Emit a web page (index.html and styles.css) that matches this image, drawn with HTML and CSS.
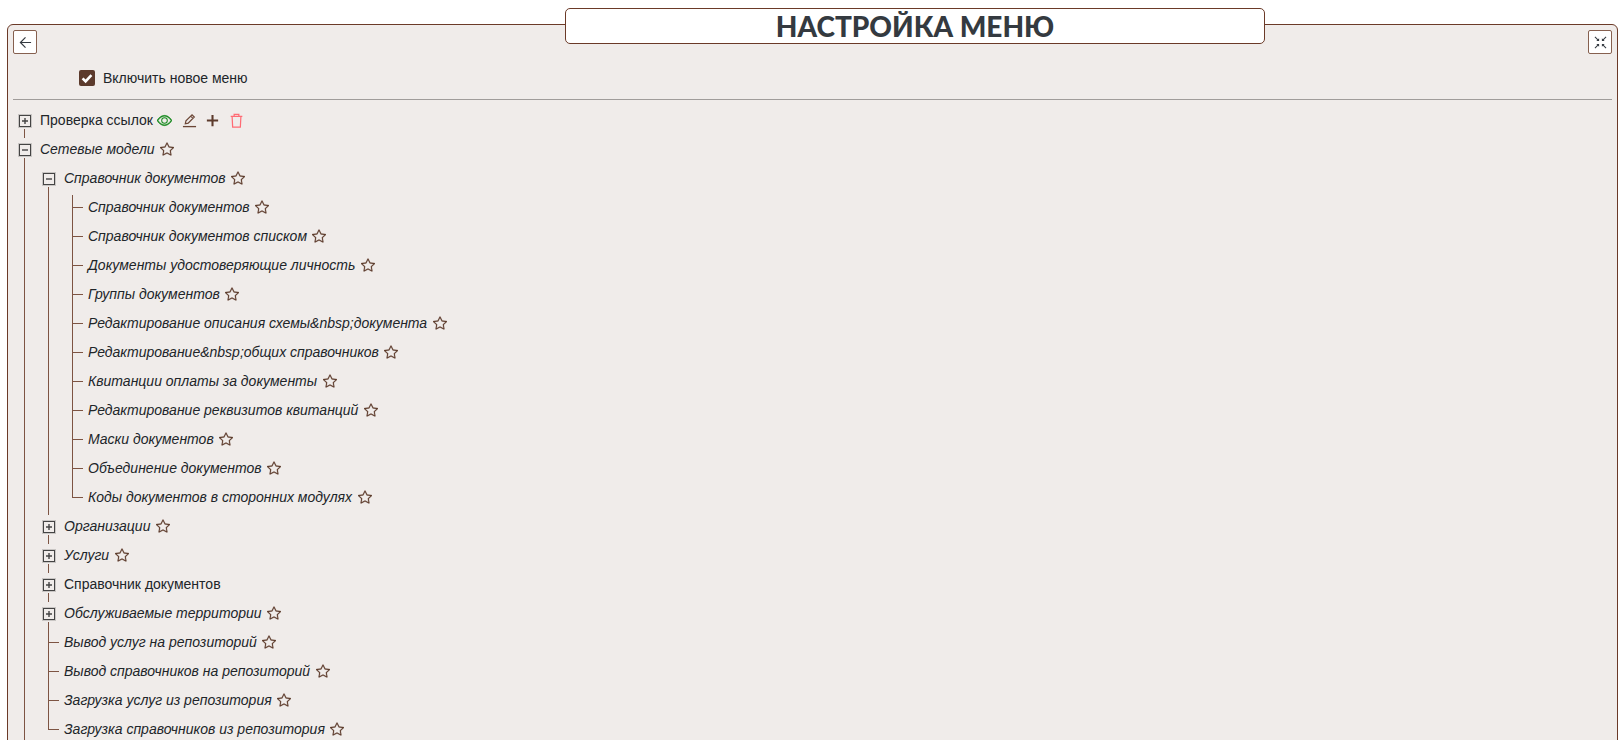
FILE: index.html
```html
<!DOCTYPE html>
<html lang="ru">
<head>
<meta charset="utf-8">
<title>Настройка меню</title>
<link rel="stylesheet" href="styles.css">
</head>
<body>
<svg class="defs" aria-hidden="true">
  <symbol id="star" viewBox="0 0 16 16"><path fill="currentColor" stroke="currentColor" stroke-width=".25" d="M2.866 14.85c-.078.444.36.791.746.593l4.39-2.256 4.389 2.256c.386.198.824-.149.746-.592l-.83-4.73 3.522-3.356c.33-.314.16-.888-.282-.95l-4.898-.696L8.465.792a.513.513 0 0 0-.927 0L5.354 5.12l-4.898.696c-.441.062-.612.636-.283.95l3.523 3.356-.83 4.73zm4.905-2.767-3.686 1.894.694-3.957a.565.565 0 0 0-.163-.505L1.71 6.745l4.052-.576a.525.525 0 0 0 .393-.288L8 2.223l1.847 3.658a.525.525 0 0 0 .393.288l4.052.575-2.906 2.77a.565.565 0 0 0-.163.506l.694 3.957-3.686-1.894a.503.503 0 0 0-.461 0z"/></symbol>
  <symbol id="plus" viewBox="0 0 10 10"><path d="M2 5h6M5 2v6" stroke="currentColor" stroke-width="1.4" fill="none"/></symbol>
  <symbol id="minus" viewBox="0 0 10 10"><path d="M2 5h6" stroke="currentColor" stroke-width="1.4" fill="none"/></symbol>
</svg>
<div class="title-box"><h1 class="title">НАСТРОЙКА МЕНЮ</h1></div>
<main class="panel">
  <div class="toolbar">
    <button class="tool-btn" type="button" aria-label="Назад">
      <svg class="tool-icon" viewBox="0 0 14 14"><path fill="none" stroke="currentColor" stroke-width="1.3" d="M7 1.5L1.5 7 7 12.5M1.5 7H13"/></svg>
    </button>
    <button class="tool-btn" type="button" aria-label="Развернуть">
      <svg class="tool-icon" viewBox="0 0 14 14"><path fill="none" stroke="currentColor" stroke-width="1.1" d="M1 1l3.5 3.5M13 1L9.500 4.500M1 13l3.500-3.500M13 13L9.500 9.500"/><path fill="currentColor" d="M5.500 2.500v3h-3zM8.500 2.500v3h3zM5.500 11.500v-3h-3zM8.500 11.500v-3h3z"/></svg>
    </button>
  </div>
  <label class="enable">
    <span class="check"><svg viewBox="0 0 16 16"><path d="M3.600 8.400l3 3 5.800-6.200" fill="none" stroke="#fff" stroke-width="2.600"/></svg></span>
    <span>Включить новое меню</span>
  </label>
  <hr class="divider">
  <ul class="tree">
    <li class="node branch">
      <div class="row">
        <span class="tog"><svg><use href="#plus"/></svg></span>
        <span class="label">Проверка ссылок</span>
        <svg class="act eye" viewBox="0 0 16 16"><path fill="currentColor" stroke="currentColor" stroke-width=".5" d="M16 8s-3-5.500-8-5.500S0 8 0 8s3 5.500 8 5.500S16 8 16 8zM1.173 8a13.133 13.133 0 0 1 1.660-2.043C4.120 4.668 5.880 3.500 8 3.500c2.120 0 3.879 1.168 5.168 2.457A13.133 13.133 0 0 1 14.828 8c-.058.087-.122.183-.195.288-.335.480-.830 1.120-1.465 1.755C11.879 11.332 10.119 12.500 8 12.500c-2.120 0-3.879-1.168-5.168-2.457A13.134 13.134 0 0 1 1.172 8z"/><path fill="currentColor" d="M8 5.500a2.500 2.500 0 1 0 0 5 2.500 2.500 0 0 0 0-5zM4.500 8a3.500 3.500 0 1 1 7 0 3.500 3.500 0 0 1-7 0z"/></svg>
        <svg class="act pen" viewBox="0 0 16 16"><path fill="none" stroke="currentColor" stroke-width="1.3" d="M3.500 11.500l.7-3.100 6.500-6.500 2.400 2.400-6.500 6.500zM9.300 3.300l2.400 2.400"/><path stroke="currentColor" stroke-width="1.400" d="M1 14.500h14"/></svg>
        <svg class="act add" viewBox="0 0 16 16"><path fill="none" stroke="currentColor" stroke-width="2.200" d="M8 2v12M2 8h12"/></svg>
        <svg class="act trash" viewBox="0 0 16 16"><path fill="none" stroke="currentColor" stroke-width="1.300" d="M1.800 3.500h12.400M5.500 3.500V1.500h5v2M3.300 3.500l.6 11.500h8.200l.6-11.500"/></svg>
      </div>
    </li>
    <li class="node branch">
      <div class="row">
        <span class="tog"><svg><use href="#minus"/></svg></span>
        <em class="label">Сетевые модели</em>
        <svg class="star"><use href="#star"/></svg>
      </div>
      <ul class="sub">
        <li class="node branch">
          <div class="row">
            <span class="tog"><svg><use href="#minus"/></svg></span>
            <em class="label">Справочник документов</em>
            <svg class="star"><use href="#star"/></svg>
          </div>
          <ul class="sub">
            <li class="node leaf"><div class="row"><em class="label">Справочник документов</em><svg class="star"><use href="#star"/></svg></div></li>
            <li class="node leaf"><div class="row"><em class="label">Справочник документов списком</em><svg class="star"><use href="#star"/></svg></div></li>
            <li class="node leaf"><div class="row"><em class="label">Документы удостоверяющие личность</em><svg class="star"><use href="#star"/></svg></div></li>
            <li class="node leaf"><div class="row"><em class="label">Группы документов</em><svg class="star"><use href="#star"/></svg></div></li>
            <li class="node leaf"><div class="row"><em class="label">Редактирование описания схемы&amp;nbsp;документа</em><svg class="star"><use href="#star"/></svg></div></li>
            <li class="node leaf"><div class="row"><em class="label">Редактирование&amp;nbsp;общих справочников</em><svg class="star"><use href="#star"/></svg></div></li>
            <li class="node leaf"><div class="row"><em class="label">Квитанции оплаты за документы</em><svg class="star"><use href="#star"/></svg></div></li>
            <li class="node leaf"><div class="row"><em class="label">Редактирование реквизитов квитанций</em><svg class="star"><use href="#star"/></svg></div></li>
            <li class="node leaf"><div class="row"><em class="label">Маски документов</em><svg class="star"><use href="#star"/></svg></div></li>
            <li class="node leaf"><div class="row"><em class="label">Объединение документов</em><svg class="star"><use href="#star"/></svg></div></li>
            <li class="node leaf"><div class="row"><em class="label">Коды документов в сторонних модулях</em><svg class="star"><use href="#star"/></svg></div></li>
          </ul>
        </li>
        <li class="node branch"><div class="row"><span class="tog"><svg><use href="#plus"/></svg></span><em class="label">Организации</em><svg class="star"><use href="#star"/></svg></div></li>
        <li class="node branch"><div class="row"><span class="tog"><svg><use href="#plus"/></svg></span><em class="label">Услуги</em><svg class="star"><use href="#star"/></svg></div></li>
        <li class="node branch"><div class="row"><span class="tog"><svg><use href="#plus"/></svg></span><span class="label">Справочник документов</span></div></li>
        <li class="node branch"><div class="row"><span class="tog"><svg><use href="#plus"/></svg></span><em class="label">Обслуживаемые территории</em><svg class="star"><use href="#star"/></svg></div></li>
        <li class="node leaf"><div class="row"><em class="label">Вывод услуг на репозиторий</em><svg class="star"><use href="#star"/></svg></div></li>
        <li class="node leaf"><div class="row"><em class="label">Вывод справочников на репозиторий</em><svg class="star"><use href="#star"/></svg></div></li>
        <li class="node leaf"><div class="row"><em class="label">Загрузка услуг из репозитория</em><svg class="star"><use href="#star"/></svg></div></li>
        <li class="node leaf"><div class="row"><em class="label">Загрузка справочников из репозитория</em><svg class="star"><use href="#star"/></svg></div></li>
      </ul>
    </li>
  </ul>
</main>
</body>
</html>
```
FILE: styles.css
```css
* { box-sizing: border-box; }
html, body { margin: 0; height: 100%; overflow: hidden; background: #fff; }
body {
  padding: 8px 3px 0 7px;
  font-family: "Liberation Sans", Arial, sans-serif;
  font-size: 14px;
  color: #212529;
}
.defs { width: 0; height: 0; position: absolute; }

.title-box {
  position: relative;
  z-index: 1;
  width: 700px;
  height: 36px;
  margin: 0 0 -20px 558px;
  background: #fff;
  border: 1px solid #6b3a28;
  border-radius: 5px;
  display: flex;
  align-items: center;
  justify-content: center;
}
.title {
  margin: 0;
  font-family: Lato, sans-serif;
  font-weight: 900;
  font-size: 28px;
  line-height: 34px;
  color: #343a40;
}

.panel {
  min-height: 760px;
  padding: 5px;
  background: #f0ecea;
  border: 1px solid #6b3a28;
  border-radius: 6px;
}
.toolbar { display: flex; justify-content: space-between; }
.tool-btn {
  width: 24px;
  height: 24px;
  padding: 0;
  display: flex;
  align-items: center;
  justify-content: center;
  background: #fff;
  border: 1px solid #86604f;
  border-radius: 2px;
  color: #343a40;
}
.tool-icon { width: 13px; height: 13px; }

.enable {
  display: flex;
  align-items: center;
  gap: 8px;
  height: 16px;
  margin: 16px 0 0 66px;
}
.check {
  width: 16px;
  height: 16px;
  background: #5c3a2c;
  border-radius: 2px;
  display: flex;
}
.check svg { width: 16px; height: 16px; }
.divider {
  height: 1px;
  margin: 13px 0 6px;
  border: 0;
  background: #a09c9a;
}

.tree, .sub { list-style: none; margin: 0; padding: 0; }
.sub { margin-left: 24px; }
.node { position: relative; }
.node::before {
  content: "";
  position: absolute;
  left: 11px;
  width: 1px;
  background: #7d5443;
}
.branch::before { top: 23px; bottom: -3px; }
.leaf::before { top: 2px; bottom: -3px; }
.leaf:last-child::before { bottom: auto; height: 13px; }
.leaf::after {
  content: "";
  position: absolute;
  left: 11px;
  top: 14px;
  width: 11px;
  height: 1px;
  background: #7d5443;
}
.row { display: flex; align-items: center; height: 29px; }
.leaf > .row { padding-left: 27px; }
.tog {
  width: 12px;
  height: 12px;
  margin: 0 9px 0 6px;
  color: #444;
  background: #f0ecea;
  border: 1px solid #444;
  outline: 1px solid #c9c6c4;
  display: flex;
}
.tog svg { width: 10px; height: 10px; }
.label { white-space: nowrap; padding-bottom: 2px; }
.star { width: 14px; height: 14px; margin: 0 0 2px 5.5px; color: #5c3a2c; }
.act { width: 15px; height: 15px; flex: none; }
.eye { color: #12881a; margin-left: 4px; }
.pen { color: #6b4636; margin-left: 10px; }
.add { color: #5c3a2c; margin-left: 8px; }
.trash { color: #ff6b74; margin-left: 9px; }
```
